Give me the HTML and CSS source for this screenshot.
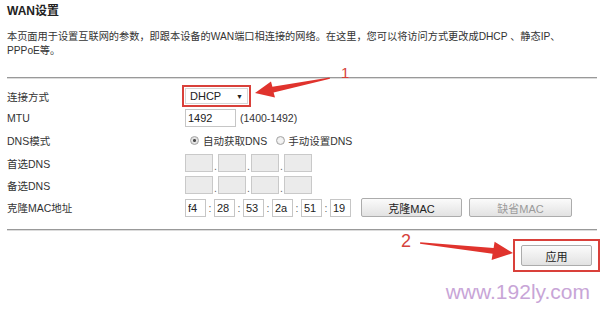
FILE: index.html
```html
<!DOCTYPE html>
<html lang="zh-CN">
<head>
    <meta charset="UTF-8">
    <meta name="viewport" content="width=device-width, initial-scale=1.0">
    <title>WAN设置</title>
    <link rel="stylesheet" href="styles.css">
</head>
<body>
    <div class="page">
        <h2 class="title">WAN设置</h2>
        <p class="desc">本页面用于设置互联网的参数，即跟本设备的WAN端口相连接的网络。在这里，您可以将访问方式更改成DHCP 、静态IP、<br>PPPoE等。</p>
        <hr class="line">

        <div class="form">
            <div class="row">
                <span class="label">连接方式</span>
                <div class="field">
                    <span class="mark mark--select">
                        <span class="select">DHCP<span class="caret">▼</span></span>
                    </span>
                </div>
            </div>
            <div class="row">
                <span class="label">MTU</span>
                <div class="field">
                    <input class="box box--mtu" type="text" value="1492">
                    <span class="hint">(1400-1492)</span>
                </div>
            </div>
            <div class="row row--tall">
                <span class="label">DNS模式</span>
                <div class="field">
                    <span class="radio radio--on"><i class="dot"></i>自动获取DNS</span>
                    <span class="radio"><i class="dot"></i>手动设置DNS</span>
                </div>
            </div>
            <div class="row">
                <span class="label">首选DNS</span>
                <div class="field">
                    <input class="box box--ip" type="text" disabled><span class="sep">.</span><input class="box box--ip" type="text" disabled><span class="sep">.</span><input class="box box--ip" type="text" disabled><span class="sep">.</span><input class="box box--ip" type="text" disabled>
                </div>
            </div>
            <div class="row">
                <span class="label">备选DNS</span>
                <div class="field">
                    <input class="box box--ip" type="text" disabled><span class="sep">.</span><input class="box box--ip" type="text" disabled><span class="sep">.</span><input class="box box--ip" type="text" disabled><span class="sep">.</span><input class="box box--ip" type="text" disabled>
                </div>
            </div>
            <div class="row row--tall">
                <span class="label">克隆MAC地址</span>
                <div class="field">
                    <input class="box box--mac" type="text" value="f4"><span class="sep sep--mac">:</span><input class="box box--mac" type="text" value="28"><span class="sep sep--mac">:</span><input class="box box--mac" type="text" value="53"><span class="sep sep--mac">:</span><input class="box box--mac" type="text" value="2a"><span class="sep sep--mac">:</span><input class="box box--mac" type="text" value="51"><span class="sep sep--mac">:</span><input class="box box--mac" type="text" value="19">
                    <button class="btn btn--clone" type="button">克隆MAC</button>
                    <button class="btn btn--off" type="button">缺省MAC</button>
                </div>
            </div>
        </div>

        <hr class="line line--bottom">

        <div class="actions">
            <span class="mark mark--apply">
                <button class="btn btn--apply" type="button">应用</button>
            </span>
        </div>

        <!-- 빨간 화살표 표시 -->
        <div class="notes">
            <svg class="arrows" width="600" height="309" viewBox="0 0 600 309">
                <polygon points="255,93 275,97.4 273.6,92.4 330,78.8 329.6,77.4 272.4,86.8 271,81.6" fill="#e0332d"/>
                <polygon points="513,253 491.6,260 492.6,253.8 420,243.8 420.2,242.2 493.6,248 494.6,241.8" fill="#e0332d"/>
            </svg>
            <span class="num num--one">1</span>
            <span class="num num--two">2</span>
        </div>

        <div class="watermark">www.192ly.com</div>
    </div>
</body>
</html>
```

FILE: styles.css
```css
* {
    box-sizing: border-box;
}
body {
    margin: 0;
    padding: 0;
    background: #fff;
    font-family: "Liberation Sans", "Noto Sans CJK SC", sans-serif;
    font-size: 10.5px;
    color: #333;
}
.page {
    position: relative;
    width: 600px;
    height: 309px;
    padding: 0 3px 0 7px;
    overflow: hidden;
}
.title {
    margin: 0;
    padding-top: 4px;
    font-size: 12px;
    line-height: 14px;
    font-weight: bold;
    color: #222;
}
.desc {
    margin: 12px 0 0;
    font-size: 10.2px;
    line-height: 14px;
}
.line {
    margin: 19px 0 0;
    height: 2px;
    border: 0;
    border-top: 1px solid #999;
    border-bottom: 1px solid #dcdcdc;
}
.line--bottom {
    margin-top: 10px;
}
.form {
    margin-top: 6px;
}
.row {
    display: flex;
    align-items: center;
    height: 22px;
}
.row--tall {
    height: 23px;
}
.label {
    width: 178px;
    flex: none;
}
.field {
    display: flex;
    align-items: center;
}
.mark {
    display: inline-flex;
    border: 2px solid #d9403a;
}
.mark--select {
    margin-left: -3px;
    padding: 1px;
}
.select {
    display: flex;
    align-items: center;
    width: 63px;
    height: 16px;
    padding: 0 4px;
    border: 1px solid #d6d6d6;
    background: #fff;
    font-size: 11px;
    color: #222;
}
.caret {
    margin-left: auto;
    font-size: 7px;
}
.box {
    height: 18px;
    margin: 0;
    padding: 0 2px;
    border: 1px solid #c6c6c6;
    background: #fff;
    font: inherit;
    font-size: 11px;
    color: #222;
    outline: none;
}
.box--mtu {
    width: 51px;
}
.hint {
    margin-left: 4px;
}
.box--ip {
    width: 28px;
    background: #ebebeb;
    border-color: #c9c9c9;
}
.sep {
    width: 5px;
    align-self: flex-end;
    text-align: center;
    line-height: 12px;
    color: #666;
}
.box--mac {
    width: 21px;
}
.sep--mac {
    width: 8px;
    align-self: center;
    line-height: 18px;
}
.radio {
    display: inline-flex;
    align-items: center;
    margin-right: 9px;
}
.dot {
    width: 9px;
    height: 9px;
    margin: 0 4px 0 5px;
    border: 1px solid #a5a5a5;
    border-radius: 50%;
    background: radial-gradient(circle, #f4f4f4 40%, #d9d9d9 100%);
}
.radio + .radio .dot {
    margin-left: 0;
    margin-right: 3px;
}
.radio--on .dot {
    background: radial-gradient(circle, #4a4a4a 0, #4a4a4a 25%, #e6e6e6 35%, #d4d4d4 100%);
}
.btn {
    height: 19px;
    margin: 0;
    padding: 0;
    border: 1px solid #acacac;
    border-radius: 2px;
    background: linear-gradient(#fbfbfb, #e2e2e2);
    font: inherit;
    font-size: 11px;
    color: #222;
}
.btn--clone {
    width: 101px;
    margin-left: 10px;
}
.btn--off {
    width: 103px;
    margin-left: 7px;
    color: #9a9a9a;
}
.actions {
    display: flex;
    justify-content: flex-end;
    margin: 8px -3px 0 0;
}
.mark--apply {
    padding: 4px 6px;
}
.btn--apply {
    width: 71px;
    height: 21px;
}
.notes {
    position: absolute;
    top: 0;
    left: 0;
    width: 600px;
    height: 309px;
    pointer-events: none;
}
.arrows {
    position: absolute;
    top: 0;
    left: 0;
}
.num {
    position: absolute;
    font-family: "Liberation Sans Narrow", "Liberation Sans", sans-serif;
    color: #d6423b;
}
.num--one {
    left: 341px;
    top: 65px;
    font-size: 15px;
    line-height: 15px;
}
.num--two {
    left: 401px;
    top: 232px;
    font-size: 18px;
    line-height: 18px;
}
.watermark {
    position: absolute;
    right: 10px;
    top: 281px;
    font-size: 21px;
    line-height: 22px;
    color: #c8a5d7;
}
```
